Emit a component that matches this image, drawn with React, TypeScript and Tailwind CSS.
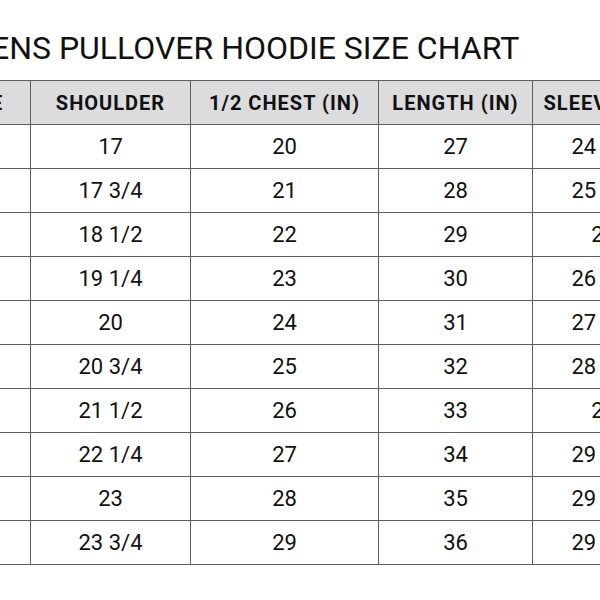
import React from "react";

const rows = [
  ["XS", "17", "20", "27", "24 1/2"],
  ["S", "17 3/4", "21", "28", "25 1/4"],
  ["M", "18 1/2", "22", "29", "26"],
  ["L", "19 1/4", "23", "30", "26 3/4"],
  ["XL", "20", "24", "31", "27 1/2"],
  ["2XL", "20 3/4", "25", "32", "28 1/4"],
  ["3XL", "21 1/2", "26", "33", "29"],
  ["4XL", "22 1/4", "27", "34", "29 1/2"],
  ["5XL", "23", "28", "35", "29 1/2"],
  ["6XL", "23 3/4", "29", "36", "29 1/2"],
];

const headers = ["SIZE", "SHOULDER", "1/2 CHEST (IN)", "LENGTH (IN)", "SLEEVE (IN)"];

export default function App() {
  return (
    <div className="w-[600px] h-[600px] overflow-hidden bg-white text-[#111]" style={{ fontFamily: "Roboto, 'DejaVu Sans', sans-serif" }}>
      <div className="-ml-[37px] pt-[28px] h-[80px] whitespace-nowrap text-[32px] leading-[40px]">
        MENS PULLOVER HOODIE SIZE CHART
      </div>
      <table className="-ml-[70px] w-[744px] border-collapse table-fixed">
        <colgroup>
          <col className="w-[100px]" />
          <col className="w-[160px]" />
          <col className="w-[188px]" />
          <col className="w-[154px]" />
          <col className="w-[142px]" />
        </colgroup>
        <thead>
          <tr className="bg-[#dcdcde]">
            {headers.map((h) => (
              <th key={h} className="h-[44px] p-0 border-[1.5px] border-[#5e5e5e] text-center font-bold text-[20px] tracking-[1px] whitespace-nowrap">
                {h}
              </th>
            ))}
          </tr>
        </thead>
        <tbody>
          {rows.map((r, ri) => (
            <tr key={ri}>
              {r.map((c, ci) => (
                <td key={ci} className="h-[44px] p-0 border-[1.5px] border-[#5e5e5e] text-center text-[22px] whitespace-nowrap">
                  {c}
                </td>
              ))}
            </tr>
          ))}
        </tbody>
      </table>
    </div>
  );
}
